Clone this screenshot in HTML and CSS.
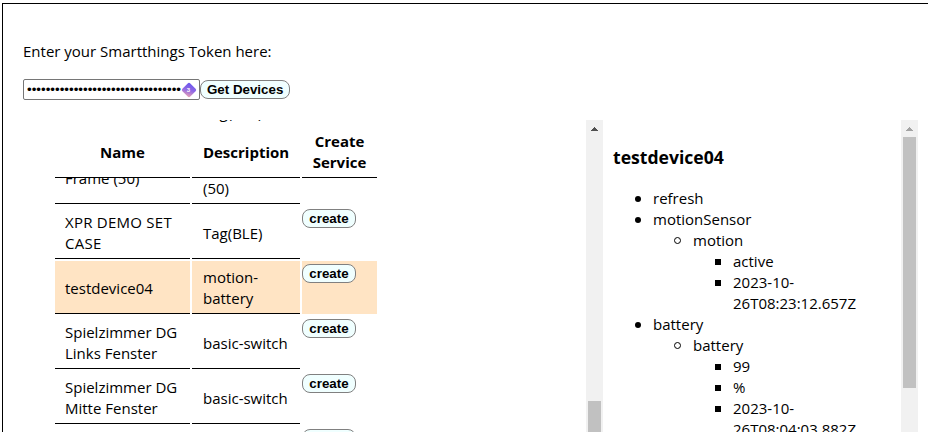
FILE: index.html
```html
<!DOCTYPE html>
<html lang="en">
<head>
<meta charset="utf-8">
<title>Smartthings Devices</title>
<link rel="stylesheet" href="styles.css">
</head>
<body>
<main class="app">
  <p class="prompt">Enter your Smartthings Token here:</p>
  <div class="token-row">
    <div class="token-field">
      <input class="token" type="text" value="•••••••••••••••••••••••••••••••••" aria-label="Token">
      <svg class="manager" width="16" height="16" viewBox="0 0 16 16">
        <defs><linearGradient id="g" x1="0.6" y1="0" x2="0.3" y2="1"><stop offset="0" stop-color="#6655ee"/><stop offset=".5" stop-color="#9168e4"/><stop offset="1" stop-color="#f0a8b0"/></linearGradient></defs>
        <path d="M6.7 1.4Q8 .1 9.3 1.4L14.6 6.7Q15.9 8 14.6 9.3L9.3 14.6Q8 15.9 6.7 14.6L1.4 9.3Q.1 8 1.4 6.7Z" fill="url(#g)"/>
        <text class="count" x="7.5" y="10.2" text-anchor="middle">3</text>
      </svg>
    </div>
    <button class="btn">Get Devices</button>
  </div>
  <div class="panes">
    <section class="devices">
      <div class="head row">
        <div>Name</div><div>Description</div><div>Create<br>Service</div>
      </div>
      <div class="rows">
        <div class="row short"><div class="cell"></div><div class="cell">Tag(BLE)</div><div class="action"></div></div>
        <div class="row tall"><div class="cell">Samsung<br>Frame (50)</div><div class="cell">Samsung<br>Frame<br>(50)</div><div class="action"></div></div>
        <div class="row"><div class="cell"><span class="caps">XPR DEMO SET<br>CASE</span></div><div class="cell">Tag(BLE)</div><div class="action"><button class="btn create">create</button></div></div>
        <div class="row selected"><div class="cell">testdevice04</div><div class="cell">motion-<br>battery</div><div class="action"><button class="btn create">create</button></div></div>
        <div class="row"><div class="cell">Spielzimmer DG<br>Links Fenster</div><div class="cell">basic-switch</div><div class="action"><button class="btn create">create</button></div></div>
        <div class="row"><div class="cell">Spielzimmer DG<br>Mitte Fenster</div><div class="cell">basic-switch</div><div class="action"><button class="btn create">create</button></div></div>
        <div class="row"><div class="cell"></div><div class="cell"></div><div class="action"><button class="btn create">create</button></div></div>
      </div>
    </section>
    <div class="scrollbar">
      <svg class="arrow" width="17" height="17" shape-rendering="crispEdges"><path d="M8 7h1v1h1v1h1v1h1v1H5v-1h1V9h1V8h1z" fill="#505050"/></svg>
      <div class="thumb thumb-low"></div>
    </div>
    <section class="detail">
      <h3>testdevice04</h3>
      <ul>
        <li>refresh</li>
        <li>motionSensor
          <ul><li>motion
            <ul><li>active</li><li>2023-10-<br>26T08:23:12.657Z</li></ul>
          </li></ul>
        </li>
        <li>battery
          <ul><li>battery
            <ul><li>99</li><li>%</li><li>2023-10-<br>26T08:04:03.882Z</li></ul>
          </li></ul>
        </li>
      </ul>
    </section>
    <div class="scrollbar">
      <svg class="arrow" width="17" height="17" shape-rendering="crispEdges"><path d="M8 7h1v1h1v1h1v1h1v1H5v-1h1V9h1V8h1z" fill="#a3a3a3"/></svg>
      <div class="thumb"></div>
    </div>
  </div>
</main>
</body>
</html>
```
FILE: styles.css
```css
*, *::before { box-sizing: border-box; }
html, body { height: 100%; overflow: hidden; }
body {
  margin: 0;
  padding: 3px 0 0 2px;
  background: #fff;
  color: #000;
  font: 15px/21px "Open Sans", "Noto Sans", sans-serif;
}
.app {
  height: 429px;
  padding: 37px 0 0 20px;
  border: solid #000;
  border-width: 1px 0 0 1px;
  overflow: hidden;
}
.prompt { margin: 0 0 17px; }
.token-row { display: flex; align-items: center; height: 21px; }
.token-field { position: relative; width: 177px; height: 21px; }
.token {
  display: block;
  width: 177px;
  height: 21px;
  padding: 1px 3px;
  border: 1px solid #767676;
  border-radius: 2px;
  background: #fff;
  color: #000;
  font: 13.333px "Liberation Sans", sans-serif;
}
.manager { position: absolute; left: 158px; top: 3px; }
.count { fill: #fff; font: bold 6px "Liberation Sans", sans-serif; }
.btn {
  display: block;
  height: 19px;
  padding: 0 6px;
  border: 1px solid #808080;
  border-radius: 8px;
  background: azure;
  color: #000;
  font: bold 13.333px/16px "Liberation Sans", sans-serif;
}
.create { width: 54px; }
.panes { display: flex; height: 312px; margin-top: 20px; }
.devices { position: relative; width: 563px; padding-left: 32px; overflow: hidden; }
.row {
  display: grid;
  grid-template-columns: 135px 108px 75px;
  column-gap: 2px;
  width: 322px;
  height: 53px;
}
.head {
  position: absolute;
  top: 2px;
  height: 56px;
  background: #fff;
  font-weight: 700;
  text-align: center;
}
.head > div {
  display: flex;
  align-items: center;
  justify-content: center;
  padding-top: 5px;
  border-bottom: 1px solid #000;
}
.rows { display: grid; row-gap: 2px; margin-top: -24px; }
.cell {
  display: flex;
  align-items: center;
  padding: 2px 10px 0;
  border-bottom: 1px solid #000;
  white-space: nowrap;
}
.cell + .cell { padding-left: 11px; }
.caps { letter-spacing: 0.25px; }
.action { padding-top: 3px; }
.short { height: 32px; }
.tall { height: 74px; }
.selected > div { background: bisque; }
.scrollbar { width: 17px; background: #f1f1f1; }
.arrow { display: block; }
.thumb { width: 13px; height: 251px; margin-left: 2px; background: #c1c1c1; }
.thumb-low { height: 60px; margin-top: 264px; }
.detail { width: 298px; padding-left: 10px; overflow: hidden; }
.detail h3 { margin: 25px 0 18px; font-size: 17.6px; line-height: 25px; }
.detail ul { margin: 0; padding-left: 40px; list-style: none; }
.detail li { position: relative; }
.detail li::before {
  content: "";
  position: absolute;
  left: -18px;
  top: 8px;
  width: 6px;
  height: 6px;
  border-radius: 50%;
  background: #000;
}
.detail ul ul > li::before {
  left: -19px;
  top: 7px;
  width: 7px;
  height: 7px;
  border: 1px solid #000;
  background: none;
}
.detail ul ul ul > li::before {
  left: -18px;
  top: 8px;
  width: 6px;
  height: 6px;
  border-radius: 0;
  background: #000;
}
```
